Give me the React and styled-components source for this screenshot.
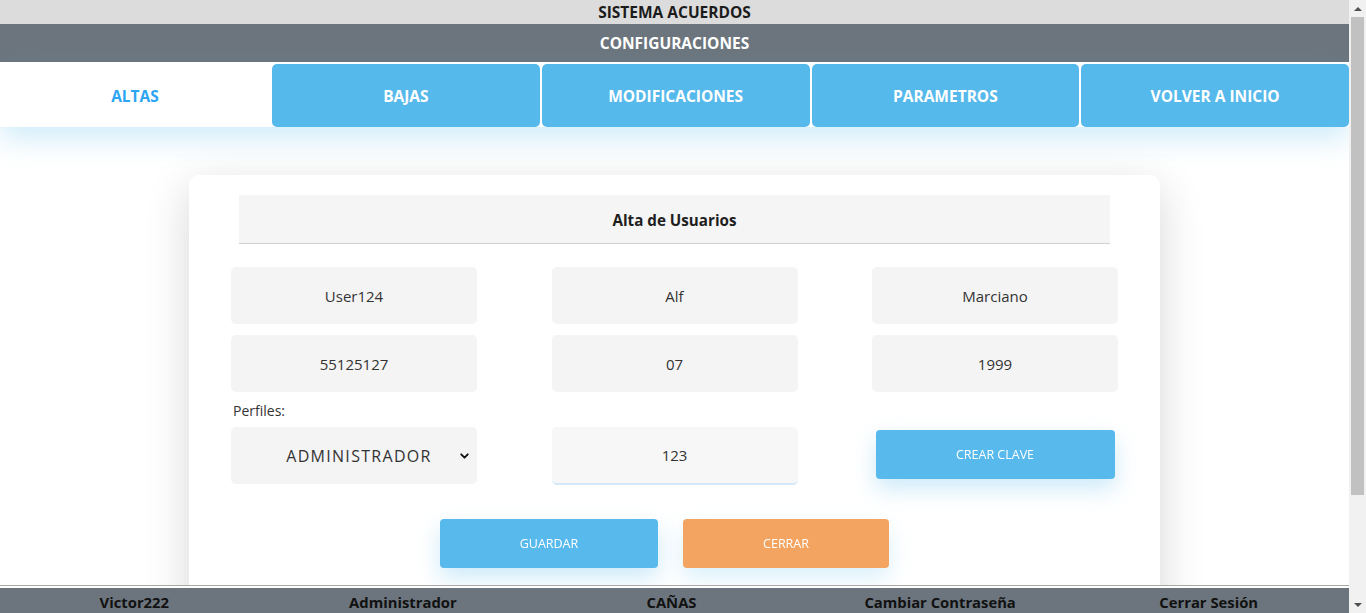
import React from 'react'
import styled, { createGlobalStyle } from 'styled-components'
import { ChevronDown } from 'lucide-react'

const GlobalStyle = createGlobalStyle`
  html, body {
    margin: 0;
    padding: 0;
    background: #fff;
  }

  body {
    font-family: "Open Sans", "Noto Sans", sans-serif;
    color: #212529;
  }

  * {
    box-sizing: border-box;
  }
`;

// the page is laid out next to a classic 17px scrollbar
const Page = styled.div`
  width: 1349px;
`;

const TopBar = styled.header`
  height: 24px;
  line-height: 24px;
  background: #dcdcdc;
  text-align: center;
  font-weight: bold;
  font-size: 15.5px;
  color: #1b1b1b;
`;

const SubBar = styled.div`
  height: 38px;
  line-height: 38px;
  background: #6c757d;
  text-align: center;
  font-weight: bold;
  font-size: 15.5px;
  color: #fff;
`;

const TabRow = styled.nav`
  display: flex;
  gap: 2px;
  padding-top: 2px;
  background: #fff;
  box-shadow: 0 12px 28px rgba(86, 185, 235, 0.28);
  position: relative;
`;

const Tab = styled.button`
  flex: 1;
  height: 63px;
  border: none;
  border-radius: 5px;
  font-family: inherit;
  font-weight: bold;
  font-size: 15.5px;
  cursor: pointer;
  background: ${props => props.active ? '#fff' : '#56b9eb'};
  color: ${props => props.active ? '#2ea5f2' : '#fff'};
  ${props => props.active && 'flex: 0 0 270px;'}
`;

const Main = styled.main`
  padding: 48px 0 170px;
`;

const Card = styled.section`
  width: 971px;
  margin: 0 auto;
  background: #fff;
  border-radius: 10px;
  padding: 20px 42px 60px;
  box-shadow: 0 12px 45px rgba(0, 0, 0, 0.16);
`;

const CardTitle = styled.h2`
  margin: 0 8px;
  height: 49px;
  line-height: 50px;
  background: #f5f5f5;
  border-bottom: 1px solid #d2d2d2;
  text-align: center;
  font-size: 15.2px;
  font-weight: bold;
  color: #1e1e1e;
`;

const FieldGrid = styled.div`
  display: grid;
  grid-template-columns: repeat(3, 246px);
  justify-content: space-between;
  row-gap: 11px;
  margin-top: 23px;
  align-items: start;
`;

const Field = styled.input`
  width: 100%;
  height: ${props => props.focused ? '58px' : '57px'};
  margin-top: ${props => props.focused ? '24px' : '0'};
  border: none;
  border-radius: 5px;
  background: ${props => props.focused ? '#f7f7f7' : '#f4f4f4'};
  border-bottom: ${props => props.focused ? '2px solid #d4e9f7' : 'none'};
  text-align: center;
  font-family: inherit;
  font-size: 15px;
  color: #333;
  outline: none;
  caret-color: #000;
`;

const SelectCell = styled.div`
  display: flex;
  flex-direction: column;
`;

const Label = styled.label`
  height: 16px;
  line-height: 16px;
  margin: 0 0 8px 2px;
  font-size: 14px;
  color: #333;
`;

const SelectWrap = styled.div`
  position: relative;
`;

const Select = styled.select`
  width: 100%;
  height: 57px;
  border: none;
  border-radius: 5px;
  background: #f4f4f4;
  padding: 0 12px 0 22px;
  appearance: none;
  text-align: center;
  text-align-last: center;
  font-family: inherit;
  font-size: 16px;
  letter-spacing: 1.3px;
  color: #333;
  outline: none;
`;

const SelectArrow = styled.span`
  position: absolute;
  right: 6px;
  top: 50%;
  transform: translateY(-50%);
  display: flex;
  color: #111;
  pointer-events: none;
`;

const ActionButton = styled.button`
  height: 49px;
  width: ${props => props.width || '218px'};
  border: none;
  border-radius: 4px;
  background: ${props => props.color || '#58b9ec'};
  color: #fff;
  font-family: inherit;
  font-size: 12.5px;
  cursor: pointer;
  box-shadow: 0 10px 22px ${props => props.glow || 'rgba(88, 185, 236, 0.3)'};
`;

const KeyButton = styled(ActionButton)`
  justify-self: center;
  margin-top: 27px;
`;

const ButtonRow = styled.div`
  display: flex;
  justify-content: center;
  gap: 25px;
  margin-top: 34px;
  padding-right: 20px;
`;

const Footer = styled.footer`
  position: fixed;
  left: 0;
  bottom: 0;
  width: 1349px;
  height: 28px;
  border-top: 1px solid #a8a8a8;
  padding-top: 2px;
  background: #fff;
`;

const FooterBar = styled.div`
  display: grid;
  grid-template-columns: repeat(5, 1fr);
  height: 100%;
  background: #6c757d;
  padding-right: 6px;
`;

const FooterItem = styled.span`
  text-align: center;
  line-height: 28px;
  font-weight: bold;
  font-size: 14.8px;
  color: #111;
`;

const Scrollbar = styled.div`
  position: fixed;
  top: 0;
  right: 0;
  width: 17px;
  height: 100vh;
  background: #f1f1f1;
  display: flex;
  flex-direction: column;
  align-items: center;
`;

const ScrollArrow = styled.div`
  height: 17px;
  width: 17px;
  display: flex;
  align-items: center;
  justify-content: center;

  &::before {
    content: '';
    border-left: 4px solid transparent;
    border-right: 4px solid transparent;
    ${props => props.down
      ? 'border-top: 4px solid #505050;'
      : 'border-bottom: 4px solid #505050;'}
  }
`;

const ScrollThumb = styled.div`
  width: 13px;
  height: 478px;
  background: #c1c1c1;
`;

const ScrollTrack = styled.div`
  flex: 1;
`;

const tabs = ['ALTAS', 'BAJAS', 'MODIFICACIONES', 'PARAMETROS', 'VOLVER A INICIO'];
const footerItems = ['Victor222', 'Administrador', 'CAÑAS', 'Cambiar Contraseña', 'Cerrar Sesión'];

export default function App() {
  return (
    <>
      <GlobalStyle />
      <Page>
        <TopBar>SISTEMA ACUERDOS</TopBar>
        <SubBar>CONFIGURACIONES</SubBar>
        <TabRow>
          {tabs.map((t, i) => (
            <Tab key={t} active={i === 0}>{t}</Tab>
          ))}
        </TabRow>
        <Main>
          <Card>
            <CardTitle>Alta de Usuarios</CardTitle>
            <FieldGrid>
              <Field defaultValue="User124" />
              <Field defaultValue="Alf" />
              <Field defaultValue="Marciano" />
              <Field defaultValue="55125127" />
              <Field defaultValue="07" />
              <Field defaultValue="1999" />
              <SelectCell>
                <Label>Perfiles:</Label>
                <SelectWrap>
                  <Select defaultValue="ADMINISTRADOR">
                    <option>ADMINISTRADOR</option>
                    <option>USUARIO</option>
                  </Select>
                  <SelectArrow><ChevronDown size={13} strokeWidth={3.5} /></SelectArrow>
                </SelectWrap>
              </SelectCell>
              <Field focused defaultValue="123" autoFocus />
              <KeyButton width="239px">CREAR CLAVE</KeyButton>
            </FieldGrid>
            <ButtonRow>
              <ActionButton>GUARDAR</ActionButton>
              <ActionButton width="206px" color="#f2a460" glow="rgba(88, 185, 236, 0.22)">CERRAR</ActionButton>
            </ButtonRow>
          </Card>
        </Main>
        <Footer>
          <FooterBar>
            {footerItems.map(f => (
              <FooterItem key={f}>{f}</FooterItem>
            ))}
          </FooterBar>
        </Footer>
      </Page>
      <Scrollbar>
        <ScrollArrow />
        <ScrollThumb />
        <ScrollTrack />
        <ScrollArrow down />
      </Scrollbar>
    </>
  )
}
